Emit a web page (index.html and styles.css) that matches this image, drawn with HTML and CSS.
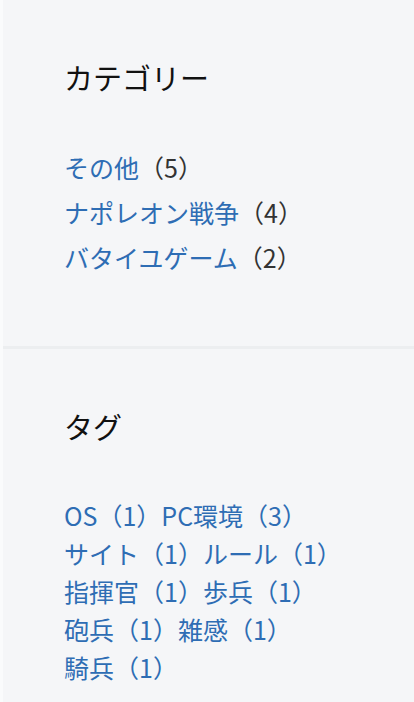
FILE: index.html
```html
<!DOCTYPE html>
<html lang="ja">
<head>
    <meta charset="UTF-8">
    <meta name="viewport" content="width=device-width, initial-scale=1.0">
    <title>サイドバー</title>
    <link rel="stylesheet" href="styles.css">
</head>
<body>
    <div class="sidebar">
        <section class="widget">
            <h2 class="widget-title">カテゴリー</h2>
            <ul class="cat-list">
                <li><a href="#">その他</a><span class="count">（5）</span></li>
                <li><a href="#">ナポレオン戦争</a><span class="count">（4）</span></li>
                <li><a href="#">バタイユゲーム</a><span class="count">（2）</span></li>
            </ul>
        </section>
        <section class="widget">
            <h2 class="widget-title">タグ</h2>
            <div class="tag-cloud"><a href="#">OS（1）</a><a href="#">PC環境（3）</a><a href="#">サイト（1）</a><a href="#">ルール（1）</a><a href="#">指揮官（1）</a><a href="#">歩兵（1）</a><a href="#">砲兵（1）</a><a href="#">雑感（1）</a><a href="#">騎兵（1）</a></div>
        </section>
    </div>
</body>
</html>
```

FILE: styles.css
```css
body {
    margin: 0;
    padding: 0;
    background-color: #fafbfc;
    font-family: "Noto Sans CJK JP", "Noto Sans", sans-serif;
    color: #333;
}
.sidebar {
    margin-left: 3px;
}
.widget {
    background-color: #f5f6f8;
    padding: 57px 64px 66px 61px;
}
.widget + .widget {
    border-top: 3px solid #eceef0;
}
.widget-title {
    margin: 0 0 48px;
    font-size: 29px;
    line-height: 40px;
    font-weight: normal;
    color: #111;
}
.cat-list {
    list-style: none;
    margin: 0;
    padding: 0;
    font-size: 25px;
    line-height: 45px;
}
a {
    color: #2e6db4;
    text-decoration: none;
}
.count {
    color: #333;
}
.tag-cloud {
    display: flex;
    flex-wrap: wrap;
    margin-top: 50px;
    font-size: 25px;
    line-height: 38px;
}
```
